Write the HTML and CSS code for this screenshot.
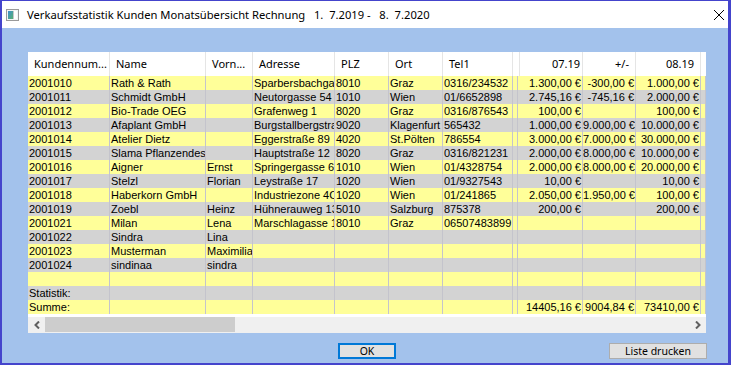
FILE: index.html
```html
<!DOCTYPE html>
<html lang="de">
<head>
    <meta charset="UTF-8">
    <title>Verkaufsstatistik Kunden</title>
    <link rel="stylesheet" href="styles.css">
</head>
<body>
    <div class="window">
        <div class="titlebar">
            <svg class="app-icon" width="13" height="12" viewBox="0 0 13 12">
                <defs>
                    <linearGradient id="pane" x1="0" y1="0" x2="1" y2="1">
                        <stop offset="0" stop-color="#3f8fd0"/>
                        <stop offset="1" stop-color="#58b070"/>
                    </linearGradient>
                </defs>
                <rect x="0.5" y="0.5" width="12" height="11" fill="#f4f4f4" stroke="#9a9a9a"/>
                <rect x="2" y="2" width="5" height="8" fill="url(#pane)"/>
                <rect x="8" y="2" width="3" height="8" fill="#ffffff"/>
                <line x1="7.5" y1="2" x2="7.5" y2="10" stroke="#c8c8c8"/>
            </svg>
            <span class="title">Verkaufsstatistik Kunden Monatsübersicht Rechnung   1.  7.2019 -   8.  7.2020</span>
            <svg class="close" width="10" height="10" viewBox="0 0 10 10">
                <path d="M0 0 L10 10 M10 0 L0 10" stroke="#000" stroke-width="1"/>
            </svg>
        </div>

        <div class="body">
            <div class="grid">
                <div class="row head">
                    <div>Kundennum...</div><div>Name</div><div>Vorn...</div><div>Adresse</div><div>PLZ</div><div>Ort</div><div>Tel1</div><div></div><div class="n first">07.19</div><div class="n">+/-</div><div class="n">08.19</div><div></div>
                </div>
                <div class="row">
                    <div>2001010</div><div>Rath &amp; Rath</div><div></div><div>Sparbersbachga</div><div>8010</div><div>Graz</div><div>0316/234532</div><div></div><div class="n">1.300,00 €</div><div class="n">-300,00 €</div><div class="n">1.000,00 €</div><div></div>
                </div>
                <div class="row alt">
                    <div>2001011</div><div>Schmidt GmbH</div><div></div><div>Neutorgasse 54</div><div>1010</div><div>Wien</div><div>01/6652898</div><div></div><div class="n">2.745,16 €</div><div class="n">-745,16 €</div><div class="n">2.000,00 €</div><div></div>
                </div>
                <div class="row">
                    <div>2001012</div><div>Bio-Trade OEG</div><div></div><div>Grafenweg 1</div><div>8020</div><div>Graz</div><div>0316/876543</div><div></div><div class="n">100,00 €</div><div class="n"></div><div class="n">100,00 €</div><div></div>
                </div>
                <div class="row alt">
                    <div>2001013</div><div>Afaplant GmbH</div><div></div><div>Burgstallbergstra</div><div>9020</div><div>Klagenfurt</div><div>565432</div><div></div><div class="n">1.000,00 €</div><div class="n">9.000,00 €</div><div class="n">10.000,00 €</div><div></div>
                </div>
                <div class="row">
                    <div>2001014</div><div>Atelier Dietz</div><div></div><div>Eggerstraße 89</div><div>4020</div><div>St.Pölten</div><div>786554</div><div></div><div class="n">3.000,00 €</div><div class="n">7.000,00 €</div><div class="n">30.000,00 €</div><div></div>
                </div>
                <div class="row alt">
                    <div>2001015</div><div>Slama Pflanzendesi</div><div></div><div>Hauptstraße 12</div><div>8020</div><div>Graz</div><div>0316/821231</div><div></div><div class="n">2.000,00 €</div><div class="n">8.000,00 €</div><div class="n">10.000,00 €</div><div></div>
                </div>
                <div class="row">
                    <div>2001016</div><div>Aigner</div><div>Ernst</div><div>Springergasse 6</div><div>1010</div><div>Wien</div><div>01/4328754</div><div></div><div class="n">2.000,00 €</div><div class="n">8.000,00 €</div><div class="n">20.000,00 €</div><div></div>
                </div>
                <div class="row alt">
                    <div>2001017</div><div>Stelzl</div><div>Florian</div><div>Leystraße 17</div><div>1020</div><div>Wien</div><div>01/9327543</div><div></div><div class="n">10,00 €</div><div class="n"></div><div class="n">10,00 €</div><div></div>
                </div>
                <div class="row">
                    <div>2001018</div><div>Haberkorn GmbH</div><div></div><div>Industriezone 4C</div><div>1020</div><div>Wien</div><div>01/241865</div><div></div><div class="n">2.050,00 €</div><div class="n">1.950,00 €</div><div class="n">100,00 €</div><div></div>
                </div>
                <div class="row alt">
                    <div>2001019</div><div>Zoebl</div><div>Heinz</div><div>Hühnerauweg 13</div><div>5010</div><div>Salzburg</div><div>875378</div><div></div><div class="n">200,00 €</div><div class="n"></div><div class="n">200,00 €</div><div></div>
                </div>
                <div class="row">
                    <div>2001021</div><div>Milan</div><div>Lena</div><div>Marschlagasse 1</div><div>8010</div><div>Graz</div><div>06507483899</div><div></div><div></div><div></div><div></div><div></div>
                </div>
                <div class="row alt">
                    <div>2001022</div><div>Sindra</div><div>Lina</div><div></div><div></div><div></div><div></div><div></div><div></div><div></div><div></div><div></div>
                </div>
                <div class="row">
                    <div>2001023</div><div>Musterman</div><div>Maximilia</div><div></div><div></div><div></div><div></div><div></div><div></div><div></div><div></div><div></div>
                </div>
                <div class="row alt">
                    <div>2001024</div><div>sindinaa</div><div>sindra</div><div></div><div></div><div></div><div></div><div></div><div></div><div></div><div></div><div></div>
                </div>
                <div class="row">
                    <div></div><div></div><div></div><div></div><div></div><div></div><div></div><div></div><div></div><div></div><div></div><div></div>
                </div>
                <div class="row alt">
                    <div>Statistik:</div><div></div><div></div><div></div><div></div><div></div><div></div><div></div><div></div><div></div><div></div><div></div>
                </div>
                <div class="row">
                    <div>Summe:</div><div></div><div></div><div></div><div></div><div></div><div></div><div></div><div class="n">14405,16 €</div><div class="n">9004,84 €</div><div class="n">73410,00 €</div><div></div>
                </div>

                <div class="hscroll">
                    <div class="arrow">
                        <svg width="6" height="8" viewBox="0 0 6 8"><path d="M5 0.5 L1.5 4 L5 7.5" fill="none" stroke="#606060" stroke-width="2"/></svg>
                    </div>
                    <div class="thumb"></div>
                    <div class="track"></div>
                    <div class="arrow">
                        <svg width="6" height="8" viewBox="0 0 6 8"><path d="M1 0.5 L4.5 4 L1 7.5" fill="none" stroke="#606060" stroke-width="2"/></svg>
                    </div>
                </div>
            </div>

            <div class="buttons">
                <button class="btn ok">OK</button>
                <button class="btn print">Liste drucken</button>
            </div>
        </div>
    </div>
</body>
</html>
```

FILE: styles.css
```css
* {
    box-sizing: border-box;
}

body {
    margin: 0;
    font-family: "Noto Sans", sans-serif;
    color: #000;
}

.window {
    width: 731px;
    height: 365px;
    border-style: solid;
    border-color: #4444cc;
    border-width: 1px 3px 2px 2px;
    display: flex;
    flex-direction: column;
}

.titlebar {
    height: 27px;
    flex-shrink: 0;
    background: #fff;
    display: flex;
    align-items: center;
    padding: 0 4px;
}

.title {
    margin-left: 8px;
    font-size: 11.2px;
    white-space: pre;
}

.close {
    margin-left: auto;
}

.body {
    flex: 1;
    background: #a3c2ec;
    padding: 24px 22px 0 26px;
}

.grid {
    width: 678px;
    height: 281px;
    background: #fff;
    overflow: hidden;
}

.row {
    display: grid;
    grid-template-columns: 82px 96px 47px 82px 54px 54px 70px 5px 65px 53px 65px 5px;
    height: 14px;
    font: 11px/14px "Liberation Sans", Arial, sans-serif;
    background: #ffff99;
}

.row.alt {
    background: #d3d3d3;
}

.row > div {
    border-right: 1px solid #c4c4cc;
    overflow: hidden;
    white-space: nowrap;
    padding-left: 1px;
}

.row > div.n {
    text-align: right;
    padding: 0 1px 0 0;
}

.row.head {
    height: 24px;
    font: 11px/24px "Noto Sans", sans-serif;
    background: #fff;
}

.row.head > div {
    border-right-color: #e5e5e5;
    padding-left: 6px;
}

.row.head > div.n {
    padding-right: 6px;
}

.row.head > div.first {
    padding-right: 2px;
}

.hscroll {
    margin-top: 3px;
    height: 16px;
    background: #f0f0f0;
    display: flex;
}

.arrow {
    width: 17px;
    display: flex;
    align-items: center;
    justify-content: center;
}

.thumb {
    width: 190px;
    height: 15px;
    background: #cdcdcd;
}

.track {
    flex: 1;
}

.buttons {
    display: flex;
    width: 679px;
    margin-top: 10px;
}

.btn {
    height: 16px;
    padding: 0;
    font: 10.5px/12px "Noto Sans", sans-serif;
    color: #000;
    background: #e1e1e1;
    border: 1px solid #adadad;
}

.btn.ok {
    width: 58px;
    margin-left: 310px;
    border: 2px solid #0078d7;
}

.btn.print {
    width: 98px;
    margin-left: auto;
}
```
